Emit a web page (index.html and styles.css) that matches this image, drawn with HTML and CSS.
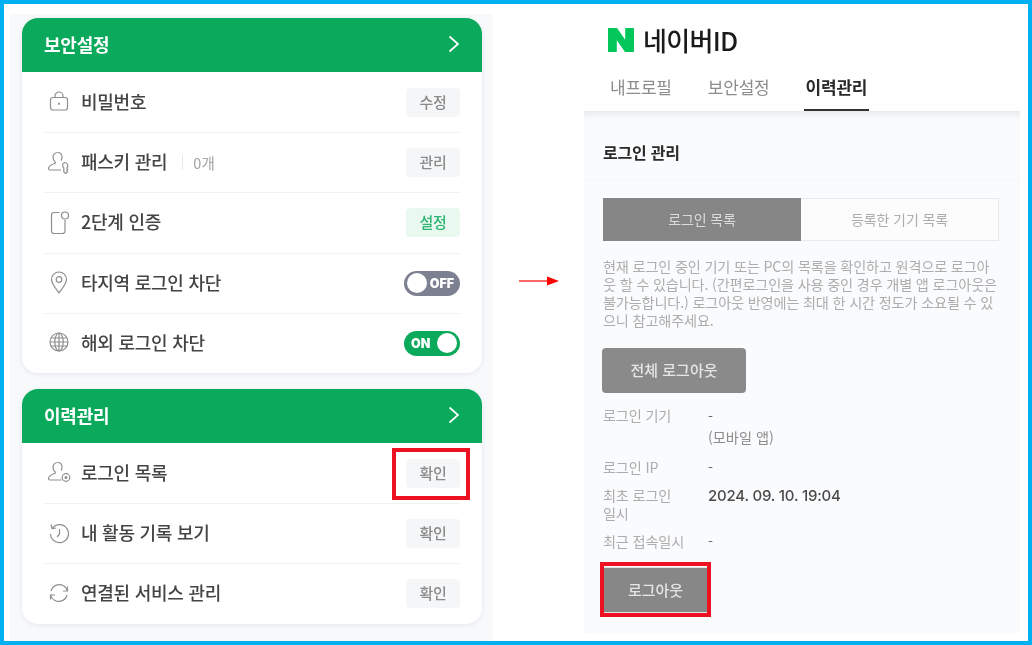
FILE: index.html
```html
<!DOCTYPE html>
<html lang="ko">
<head>
<meta charset="utf-8">
<title>네이버ID 로그인 관리</title>
<link rel="stylesheet" href="styles.css">
</head>
<body>
<div class="frame">
  <section class="left">
    <div class="card">
      <header class="card-head"><h2>보안설정</h2><svg class="chev" viewBox="0 0 12 18"><path d="M1.5 1.5 10 9l-8.500 7.500"/></svg></header>
      <div class="row"><span class="ico"><svg viewBox="0 0 24 24"><rect x="3.500" y="8.500" width="17" height="12.500" rx="2.500"/><path d="M8 8.500V7a4 4 0 0 1 8 0v1.500"/><circle class="dot" cx="12" cy="14.800" r="1.100"/></svg></span><span class="label">비밀번호</span><button class="btn">수정</button></div>
      <div class="row"><span class="ico"><svg viewBox="0 0 24 24"><path d="M10.500 2.500C7.900 2.500 6 4.500 6 7.300c0 2 1 3.700 2.200 4.700v1.200C5 14.300 1.500 16 1.500 18.500c0 1 .6 1.500 1.500 1.500h11"/><path d="M10.500 2.500c2.600 0 4.500 2 4.500 4.800 0 1.300-.4 2.500-1 3.400"/><path d="M17.500 12.500a3.300 3.300 0 0 1 3 4.600l-.7 1 .9 1.400-1 1.300.8 1.200-1.800 1.600-1.900-1.800v-3.800a3.300 3.300 0 0 1 .7-5.500z"/></svg></span><span class="label">패스키 관리</span><span class="count">0개</span><button class="btn">관리</button></div>
      <div class="row"><span class="ico"><svg viewBox="0 0 24 24"><path d="M12.500 2.500H7a2.500 2.500 0 0 0-2.500 2.500v16A2.500 2.500 0 0 0 7 23.500h8.500a2.500 2.500 0 0 0 2.500-2.500v-11"/><circle cx="18" cy="5.500" r="3.500"/></svg></span><span class="label">2단계 인증</span><button class="btn btn-green">설정</button></div>
      <div class="row"><span class="ico"><svg viewBox="0 0 24 24"><path d="M12 23C8 17.500 4.500 13.500 4.500 9.500a7.500 7.500 0 0 1 15 0c0 4-3.500 8-7.500 13.500z"/><circle cx="12" cy="9.500" r="2.800"/></svg></span><span class="label">타지역 로그인 차단</span><span class="toggle off"><i></i><b>OFF</b></span></div>
      <div class="row"><span class="ico"><svg viewBox="0 0 24 24"><circle cx="12" cy="12" r="9"/><ellipse cx="12" cy="12" rx="4.200" ry="9"/><path d="M3 12h18M4.200 8h15.600M4.200 16h15.600M12 3v18"/></svg></span><span class="label">해외 로그인 차단</span><span class="toggle on"><b>ON</b><i></i></span></div>
    </div>
    <div class="card">
      <header class="card-head"><h2>이력관리</h2><svg class="chev" viewBox="0 0 12 18"><path d="M1.5 1.5 10 9l-8.500 7.500"/></svg></header>
      <div class="row"><span class="ico"><svg viewBox="0 0 24 24"><path d="M10.500 2.500C7.900 2.500 6 4.500 6 7.300c0 2 1 3.700 2.200 4.700v1.200C5 14.300 1.500 16 1.500 18.500c0 1 .6 1.500 1.500 1.500h11.500"/><path d="M10.500 2.500c2.600 0 4.500 2 4.500 4.800 0 1.300-.4 2.500-1 3.400"/><circle cx="19" cy="17.500" r="3.800"/><circle class="dot" cx="19" cy="17.500" r="1.500"/></svg></span><span class="label">로그인 목록</span><button class="btn marked">확인<span class="mark mark-a"></span></button></div>
      <div class="row"><span class="ico"><svg viewBox="0 0 24 24"><path d="M5.500 7A9 9 0 1 1 3.500 13"/><path d="M4 3.500 5 7.500l4-.5"/><path d="M12.500 8v5l-2.500 3"/></svg></span><span class="label">내 활동 기록 보기</span><button class="btn">확인</button></div>
      <div class="row"><span class="ico"><svg viewBox="0 0 24 24"><path d="M4 10a8.500 8.500 0 0 1 15-3l1.500 3"/><path d="M20.500 5.500v4.500H16"/><path d="M20 14a8.500 8.500 0 0 1-15 3l-1.500-3"/><path d="M3.500 18.500V14H8"/></svg></span><span class="label">연결된 서비스 관리</span><button class="btn">확인</button></div>
    </div>
  </section>

  <div class="arrow-col"><svg class="arrow" viewBox="0 0 40 10"><path class="shaft" d="M0 5h30"/><path class="tip" d="M28 .5 40 5 28 9.500z"/></svg></div>

  <section class="right">
    <div class="brand">
      <svg class="n" viewBox="0 0 26 24"><path d="M0 0h9l8.200 11.800V0H26v24h-9L8.800 12.200V24H0z"/></svg>
      <span class="brand-name">네이버ID</span>
    </div>
    <nav class="tabs"><span class="tab">내프로필</span><span class="tab">보안설정</span><span class="tab active">이력관리</span></nav>
    <div class="panel">
      <h3 class="panel-title">로그인 관리</h3>
      <div class="panel-body">
        <div class="seg"><span class="seg-on">로그인 목록</span><span class="seg-off">등록한 기기 목록</span></div>
        <p class="desc">현재 로그인 중인 기기 또는 PC의 목록을 확인하고 원격으로 로그아<br>웃 할 수 있습니다. (간편로그인을 사용 중인 경우 개별 앱 로그아웃은<br>불가능합니다.) 로그아웃 반영에는 최대 한 시간 정도가 소요될 수 있<br>으니 참고해주세요.</p>
        <button class="gray-btn">전체 로그아웃</button>
        <dl class="info">
          <dt class="h2l">로그인 기기</dt><dd class="h2l">-<br><span class="sub">(모바일 앱)</span></dd>
          <dt>로그인 IP</dt><dd>-</dd>
          <dt class="h2l">최초 로그인<br>일시</dt><dd class="strong">2024. 09. 10. 19:04</dd>
          <dt>최근 접속일시</dt><dd>-</dd>
        </dl>
        <button class="logout">로그아웃<span class="mark mark-b"></span></button>
      </div>
    </div>
  </section>
</div>
</body>
</html>
```
FILE: styles.css
```css
* { box-sizing: border-box; }
html, body { margin: 0; padding: 0; background: #fff; }
body { font-family: "Noto Sans CJK KR", "Noto Sans", sans-serif; }
.frame {
  width: 1032px; height: 645px;
  border: 4px solid #00b0f0;
  display: flex;
  background: #fff;
  overflow: hidden;
}
.left {
  margin: 10px 0 0 6px;
  width: 483px;
  background: #f8f9fb;
  padding: 4px 11px 0 12px;
  display: flex; flex-direction: column; gap: 16px;
  filter: blur(.4px);
}
.card {
  background: #fff;
  border-radius: 16px;
  overflow: hidden;
  box-shadow: 0 1px 5px rgba(60,70,90,.10);
}
.card-head {
  height: 54px;
  background: #0aa95b;
  display: flex; align-items: center; justify-content: space-between;
  padding: 0 22px 2px;
}
.card-head h2 { margin: 0; font-size: 18px; font-weight: 700; color: #fff; letter-spacing: -.2px; }
.chev { width: 12px; height: 18px; fill: none; stroke: #fff; stroke-width: 1.700; }
.row {
  height: 60.200px;
  margin: 0 22px;
  display: flex; align-items: center;
  border-top: 1px solid #f0f2f5;
}
.card-head + .row { border-top: 0; }
.ico { width: 29px; margin-right: 8px; display: flex; justify-content: center; padding-bottom: 2px; }
.ico svg { width: 24px; height: 24px; fill: none; stroke: #8e8e8e; stroke-width: 1.200; }
.ico .dot { fill: #8e8e8e; stroke: none; }
.label { font-size: 18px; font-weight: 500; color: #444; letter-spacing: -.25px; padding-bottom: 3px; }
.count {
  margin-left: 15px; padding-left: 10px;
  border-left: 1px solid #e8e8e8;
  font-size: 14.500px; color: #a3a3a3; line-height: 15px;
}
.btn {
  position: relative;
  margin-left: auto;
  width: 54px; height: 29px;
  border: 0; border-radius: 4px;
  background: #f5f6f8;
  color: #8b8b8b;
  font: 500 15px "Noto Sans CJK KR", sans-serif;
  letter-spacing: -.3px;
  padding: 0 0 2px;
}
.btn-green { background: #e9f9f0; color: #2cb573; }
.toggle {
  margin-left: auto;
  width: 56px; height: 25px;
  border-radius: 13px;
  display: flex; align-items: center; justify-content: space-between;
  color: #fff;
  font: 700 12.500px "Inter", "Liberation Sans", sans-serif;
}
.toggle i { width: 20px; height: 20px; background: #fff; border-radius: 50%; }
.toggle.off { background: #7d8090; padding: 0 6px 0 3px; }
.toggle.on { background: #0aa95b; padding: 0 3px 0 7px; }
.mark { position: absolute; border: 4px solid #ee1122; pointer-events: none; }
.mark-a { left: -14px; right: -10px; top: -11px; bottom: -12px; }
.mark-b { left: -4px; right: -4px; top: -6px; bottom: -5px; }

.arrow-col { width: 91px; padding: 272px 0 0 26px; }
.arrow { display: block; width: 40px; height: 10px; }
.shaft { stroke: #ff0000; stroke-width: 1.200; fill: none; }
.tip { fill: #ff0000; }

.right { width: 436px; margin-bottom: 8px; display: flex; flex-direction: column; filter: blur(.4px); }
.brand { display: flex; align-items: center; height: 72px; padding: 0 0 0 24px; }
.n { width: 26px; height: 24px; fill: #03c75a; }
.brand-name { margin-left: 9px; font-size: 26px; font-weight: 500; color: #1a1a1a; letter-spacing: -.7px; line-height: 1; }
.tabs { display: flex; gap: 36px; height: 35px; padding-left: 26px; }
.tab { position: relative; font-size: 17px; font-weight: 400; color: #8c8c8c; line-height: 22px; height: 35px; letter-spacing: -.2px; }
.tab.active { color: #2a2a2a; font-weight: 700; border-bottom: 2px solid #333; margin: 0 -2px; padding: 0 2px; }
.panel { flex: 1; background: #fafbfd; box-shadow: inset 0 8px 8px -6px rgba(0,0,0,.10); }
.panel-title {
  margin: 0;
  height: 70px;
  padding: 29px 0 0 19px;
  font-size: 16px; font-weight: 700; color: #2a2a2a;
  line-height: 24px;
  letter-spacing: -.2px;
  border-bottom: 1px solid #f4f5f7;
}
.panel-body { padding: 17px 21px 0 19px; }
.seg { display: flex; height: 43px; }
.seg span { width: 50%; display: flex; align-items: center; justify-content: center; font-size: 14px; letter-spacing: -.1px; padding-bottom: 1px; }
.seg-on { background: #868686; color: #dcdcdc; }
.seg-off { background: #fcfcfc; color: #adadad; border: 1px solid #e9e9e9; border-left: 0; }
.desc { margin: 16px 0 0; font-size: 14.200px; line-height: 18px; color: #adadad; letter-spacing: -.18px; white-space: nowrap; }
.gray-btn {
  display: block; margin: 19px 0 0 -1px;
  width: 144px; height: 45px;
  background: #8a8a8a; border: 0; border-radius: 4px;
  color: #e6e6e6;
  font: 500 15px "Noto Sans CJK KR", sans-serif;
  padding: 0 0 2px;
}
.info {
  margin: 13px 0 0;
  display: grid; grid-template-columns: 105px 1fr;
  row-gap: 10px;
  font-size: 14.200px; line-height: 18px;
}
.info dt { color: #adadad; letter-spacing: -.18px; }
.info dd { margin: 0; color: #6a6a6a; }
.info .sub { color: #8c8c8c; line-height: 22px; }
.info dd.h2l { line-height: 20px; }
.info .strong { color: #4a4a4a; font: 500 15px "Inter", "Noto Sans CJK KR", sans-serif; letter-spacing: -.2px; }
.logout {
  position: relative;
  display: block; margin: 17px 0 0 1px;
  width: 103px; height: 46px;
  background: #878787;
  border: 0; border-top: 1px solid #dfe5e3; border-bottom: 1px solid #dfe5e3;
  color: #e6e6e6;
  font: 500 15px "Noto Sans CJK KR", sans-serif;
  padding: 0 0 2px;
}
```
